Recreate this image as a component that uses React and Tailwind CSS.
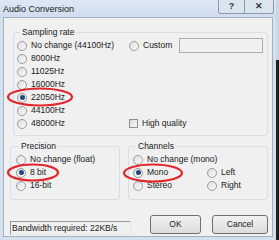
import React from 'react';

const font = { fontFamily: '"Liberation Sans", Arial, sans-serif' };

function Radio({ checked }) {
  return (
    <span className="relative inline-flex h-[10px] w-[10px] shrink-0 items-center justify-center rounded-full border border-[#9a9b9b] bg-gradient-to-br from-[#dedede] to-[#fbfbfb]">
      {checked && <span className="h-[5px] w-[5px] rounded-full bg-[#1d4a7c]" />}
    </span>
  );
}

function Option({ label, checked, className = '' }) {
  return (
    <div className={`flex h-[13px] items-center gap-[4px] ${className}`}>
      <Radio checked={checked} />
      <span>{label}</span>
    </div>
  );
}

function Group({ title, className = '', children }) {
  return (
    <fieldset className={`rounded-[3px] border border-[#d5dfe5] ${className}`}>
      <legend className="ml-[3px] px-[2px] leading-[11px]">{title}</legend>
      {children}
    </fieldset>
  );
}

function Button({ children, className = '' }) {
  return (
    <div className={`flex h-[19px] items-center justify-center rounded-[3px] border border-[#707070] bg-gradient-to-b from-[#f2f2f2] to-[#dcdcdc] ${className}`}>
      {children}
    </div>
  );
}

export default function App() {
  return (
    <div className="relative flex h-[240px] w-[279px] overflow-hidden bg-[#d3e0ee] text-[8.5px] text-[#1a1a1a]" style={font}>
      <div className="flex w-[276px] flex-col">
        <div className="flex h-[17px] items-start bg-gradient-to-b from-[#dde8f4] to-[#cfdded]">
          <span className="flex-1 pl-[3px] pt-[3px] text-[9px] text-[#222]">Audio Conversion</span>
          <div className="mr-[2px] flex h-[14px]">
            <div className="flex w-[27px] items-center justify-center rounded-bl-[3px] border border-t-0 border-[#8a9bb1] bg-[#dbe5f0] text-[9px] font-bold text-[#334]">?</div>
            <div className="flex w-[29px] items-center justify-center rounded-br-[3px] border border-l-0 border-t-0 border-[#8a9bb1] bg-[#dbe5f0] text-[9px] font-bold text-[#334]">✕</div>
          </div>
        </div>
        <div className="mx-[3px] mb-[3px] flex flex-1 flex-col border border-[#a3b1c2] bg-[#f0f0f0]">
          <Group title="Sampling rate" className="ml-[9px] mt-[9px] h-[109px] w-[255px] pl-[3px]">
            <div className="flex pt-[1px]">
              <div className="flex w-[112px] flex-col">
                <Option label="No change (44100Hz)" />
                <Option label="8000Hz" />
                <Option label="11025Hz" />
                <Option label="16000Hz" />
                <Option label="22050Hz" checked />
                <Option label="44100Hz" />
                <Option label="48000Hz" />
              </div>
              <div className="flex h-[91px] flex-1 flex-col justify-between">
                <div className="flex h-[13px] items-center">
                  <Option label="Custom" className="w-[50px]" />
                  <div className="h-[15px] w-[84px] border border-[#abadb3] bg-[#f0f0f0]" />
                </div>
                <div className="flex h-[13px] items-center gap-[4px]">
                  <span className="h-[9px] w-[9px] border border-[#8e8f8f] bg-gradient-to-br from-[#dcdcdc] to-[#fbfbfb]" />
                  <span>High quality</span>
                </div>
              </div>
            </div>
          </Group>
          <div className="mt-[5px] flex">
            <Group title="Precision" className="ml-[6px] h-[59px] w-[110px] pl-[5px]">
              <div className="pt-[1px]">
                <Option label="No change (float)" />
                <Option label="8 bit" checked />
                <Option label="16-bit" />
              </div>
            </Group>
            <Group title="Channels" className="ml-[8px] h-[59px] w-[140px] pl-[4px]">
              <div className="flex pt-[1px]">
                <div className="flex w-[74px] flex-col">
                  <Option label="No change (mono)" className="w-[120px]" />
                  <Option label="Mono" checked />
                  <Option label="Stereo" />
                </div>
                <div className="flex flex-col pt-[13px]">
                  <Option label="Left" />
                  <Option label="Right" />
                </div>
              </div>
            </Group>
          </div>
          <div className="mt-[15px] flex items-start">
            <div className="ml-[6px] mt-[6px] flex h-[14px] w-[121px] items-center border border-[#9a9a9a] border-b-[#e8e8e8] border-r-[#e8e8e8] pl-[1px]">
              Bandwidth required: 22KB/s
            </div>
            <Button className="ml-[19px] w-[51px]">OK</Button>
            <Button className="ml-[11px] w-[56px]">Cancel</Button>
          </div>
        </div>
      </div>
      <div className="flex w-[3px] flex-col">
        <div className="h-[60px] bg-[#c9d6e4]" />
        <div className="flex-1 bg-[#1e1e1e]" />
      </div>
      <svg className="pointer-events-none absolute left-0 top-0" width="279" height="240">
        <g fill="none" stroke="#e2252b" strokeWidth="2.2">
          <ellipse cx="40" cy="97" rx="32" ry="8.5" />
          <ellipse cx="33" cy="172.5" rx="25" ry="8" />
          <ellipse cx="153" cy="173" rx="29" ry="8.5" />
        </g>
      </svg>
    </div>
  );
}
